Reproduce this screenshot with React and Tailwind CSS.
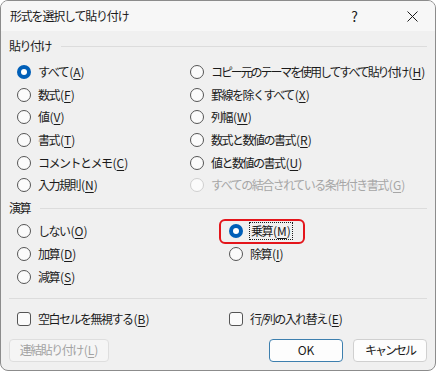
import * as React from "react";

// Accelerator key in parentheses, underlined like a Win32 dialog mnemonic.
function Key({ children }) {
  return (
    <span className="ml-[1px] tracking-normal">
      (<span className="underline underline-offset-[2px] decoration-[1px]">{children}</span>)
    </span>
  );
}

function Radio({ checked, disabled }) {
  if (checked) {
    return (
      <span className="flex h-[14px] w-[14px] shrink-0 items-center justify-center rounded-full bg-[#005fb8]">
        <span className="h-[6px] w-[6px] rounded-full bg-white" />
      </span>
    );
  }
  return (
    <span
      className={
        "h-[14px] w-[14px] shrink-0 rounded-full border bg-[#fbfbfb] " +
        (disabled ? "border-[#cfcfcf]" : "border-[#555555]")
      }
    />
  );
}

function Option({ label, k, checked, disabled, tight, h = "h-[22.6px]" }) {
  return (
    <div className={"flex items-center gap-[7px] " + h}>
      <Radio checked={checked} disabled={disabled} />
      <span
        className={
          "whitespace-nowrap " +
          (tight ? "tracking-[-2.1px] " : "") +
          (disabled ? "text-[#a6a6a6]" : "text-[#1b1b1b]")
        }
      >
        {label}
        <Key>{k}</Key>
      </span>
    </div>
  );
}

function Section({ title, className }) {
  return (
    <div className={"flex items-center gap-[10px] pl-[8px] pr-[8px] " + className}>
      <span className="text-[#1b1b1b]">{title}</span>
      <span className="h-px flex-1 bg-[#dcdcdc]" />
    </div>
  );
}

function Checkbox({ label, k }) {
  return (
    <div className="flex items-center gap-[7px]">
      <span className="h-[14px] w-[14px] shrink-0 rounded-[3px] border border-[#555555] bg-[#fbfbfb]" />
      <span className="whitespace-nowrap text-[#1b1b1b]">
        {label}
        <Key>{k}</Key>
      </span>
    </div>
  );
}

export default function App() {
  return (
    <div className="flex h-[371px] w-[436px] flex-col overflow-hidden rounded-[8px] border border-[#8c8c8c] bg-[#f0f0f0] font-['Noto_Sans_CJK_JP','Noto_Sans',sans-serif] text-[12px] leading-none tracking-[-1.5px]">
      {/* title bar */}
      <div className="flex h-[30px] shrink-0 items-center bg-[#f7f7f7]">
        <span className="pl-[9px] text-[12px] tracking-[-1.2px] text-[#1b1b1b]">形式を選択して貼り付け</span>
        <span className="ml-auto mr-[31px] text-[14px] tracking-normal text-[#1b1b1b]">?</span>
        <span className="flex h-[30px] w-[46px] items-center justify-center">
          <svg width="11" height="11" viewBox="0 0 11 11">
            <path d="M0.5 0.5 L10.5 10.5 M10.5 0.5 L0.5 10.5" stroke="#1b1b1b" strokeWidth="1" />
          </svg>
        </span>
      </div>

      <Section title="貼り付け" className="h-[30px] shrink-0" />

      <div className="grid shrink-0 grid-cols-[173px_1fr] pl-[16px]">
        <div className="flex flex-col">
          <Option label="すべて" k="A" checked />
          <Option label="数式" k="F" />
          <Option label="値" k="V" />
          <Option label="書式" k="T" />
          <Option label="コメントとメモ" k="C" />
          <Option label="入力規則" k="N" />
        </div>
        <div className="flex flex-col">
          <Option label="コピー元のテーマを使用してすべて貼り付け" k="H" tight />
          <Option label="罫線を除くすべて" k="X" />
          <Option label="列幅" k="W" />
          <Option label="数式と数値の書式" k="R" />
          <Option label="値と数値の書式" k="U" />
          <Option label="すべての結合されている条件付き書式" k="G" disabled />
        </div>
      </div>

      <Section title="演算" className="h-[23px] shrink-0" />

      <div className="grid shrink-0 grid-cols-[212px_1fr] pl-[16px]">
        <div className="flex flex-col">
          <Option label="しない" k="O" h="h-[23px]" />
          <Option label="加算" k="D" h="h-[23px]" />
          <Option label="減算" k="S" h="h-[23px]" />
        </div>
        <div className="flex flex-col">
          <div className="-ml-[10px] -my-[1px] flex h-[25px] w-[86px] items-center gap-[6px] rounded-[6px] border-2 border-[#e4151b] pl-[8px]">
            <Radio checked />
            <span className="flex h-[18px] items-center whitespace-nowrap border border-dotted border-[#1b1b1b] px-[1px] text-[#1b1b1b]">
              乗算
              <Key>M</Key>
            </span>
          </div>
          <Option label="除算" k="I" h="h-[23px]" />
        </div>
      </div>

      <div className="mx-[8px] mt-[9px] h-px shrink-0 bg-[#dcdcdc]" />

      <div className="grid h-[40px] shrink-0 grid-cols-[212px_1fr] items-center pl-[16px]">
        <Checkbox label="空白セルを無視する" k="B" />
        <Checkbox label="行/列の入れ替え" k="E" />
      </div>

      <div className="flex shrink-0 items-center px-[8px]">
        <button className="flex h-[23px] w-[100px] items-center justify-center whitespace-nowrap rounded-[4px] border border-[#dedede] bg-[#f5f5f5] text-[#a3a3a3]">
          連結貼り付け
          <Key>L</Key>
        </button>
        <button className="ml-auto flex h-[23px] w-[74px] items-center justify-center rounded-[4px] border border-[#3d7fae] bg-[#fdfdfd] tracking-normal text-[#1b1b1b]">
          OK
        </button>
        <button className="ml-[10px] flex h-[23px] w-[74px] items-center justify-center rounded-[4px] border border-[#d0d0d0] bg-[#fdfdfd] tracking-[-2px] text-[#1b1b1b]">
          キャンセル
        </button>
      </div>
    </div>
  );
}
